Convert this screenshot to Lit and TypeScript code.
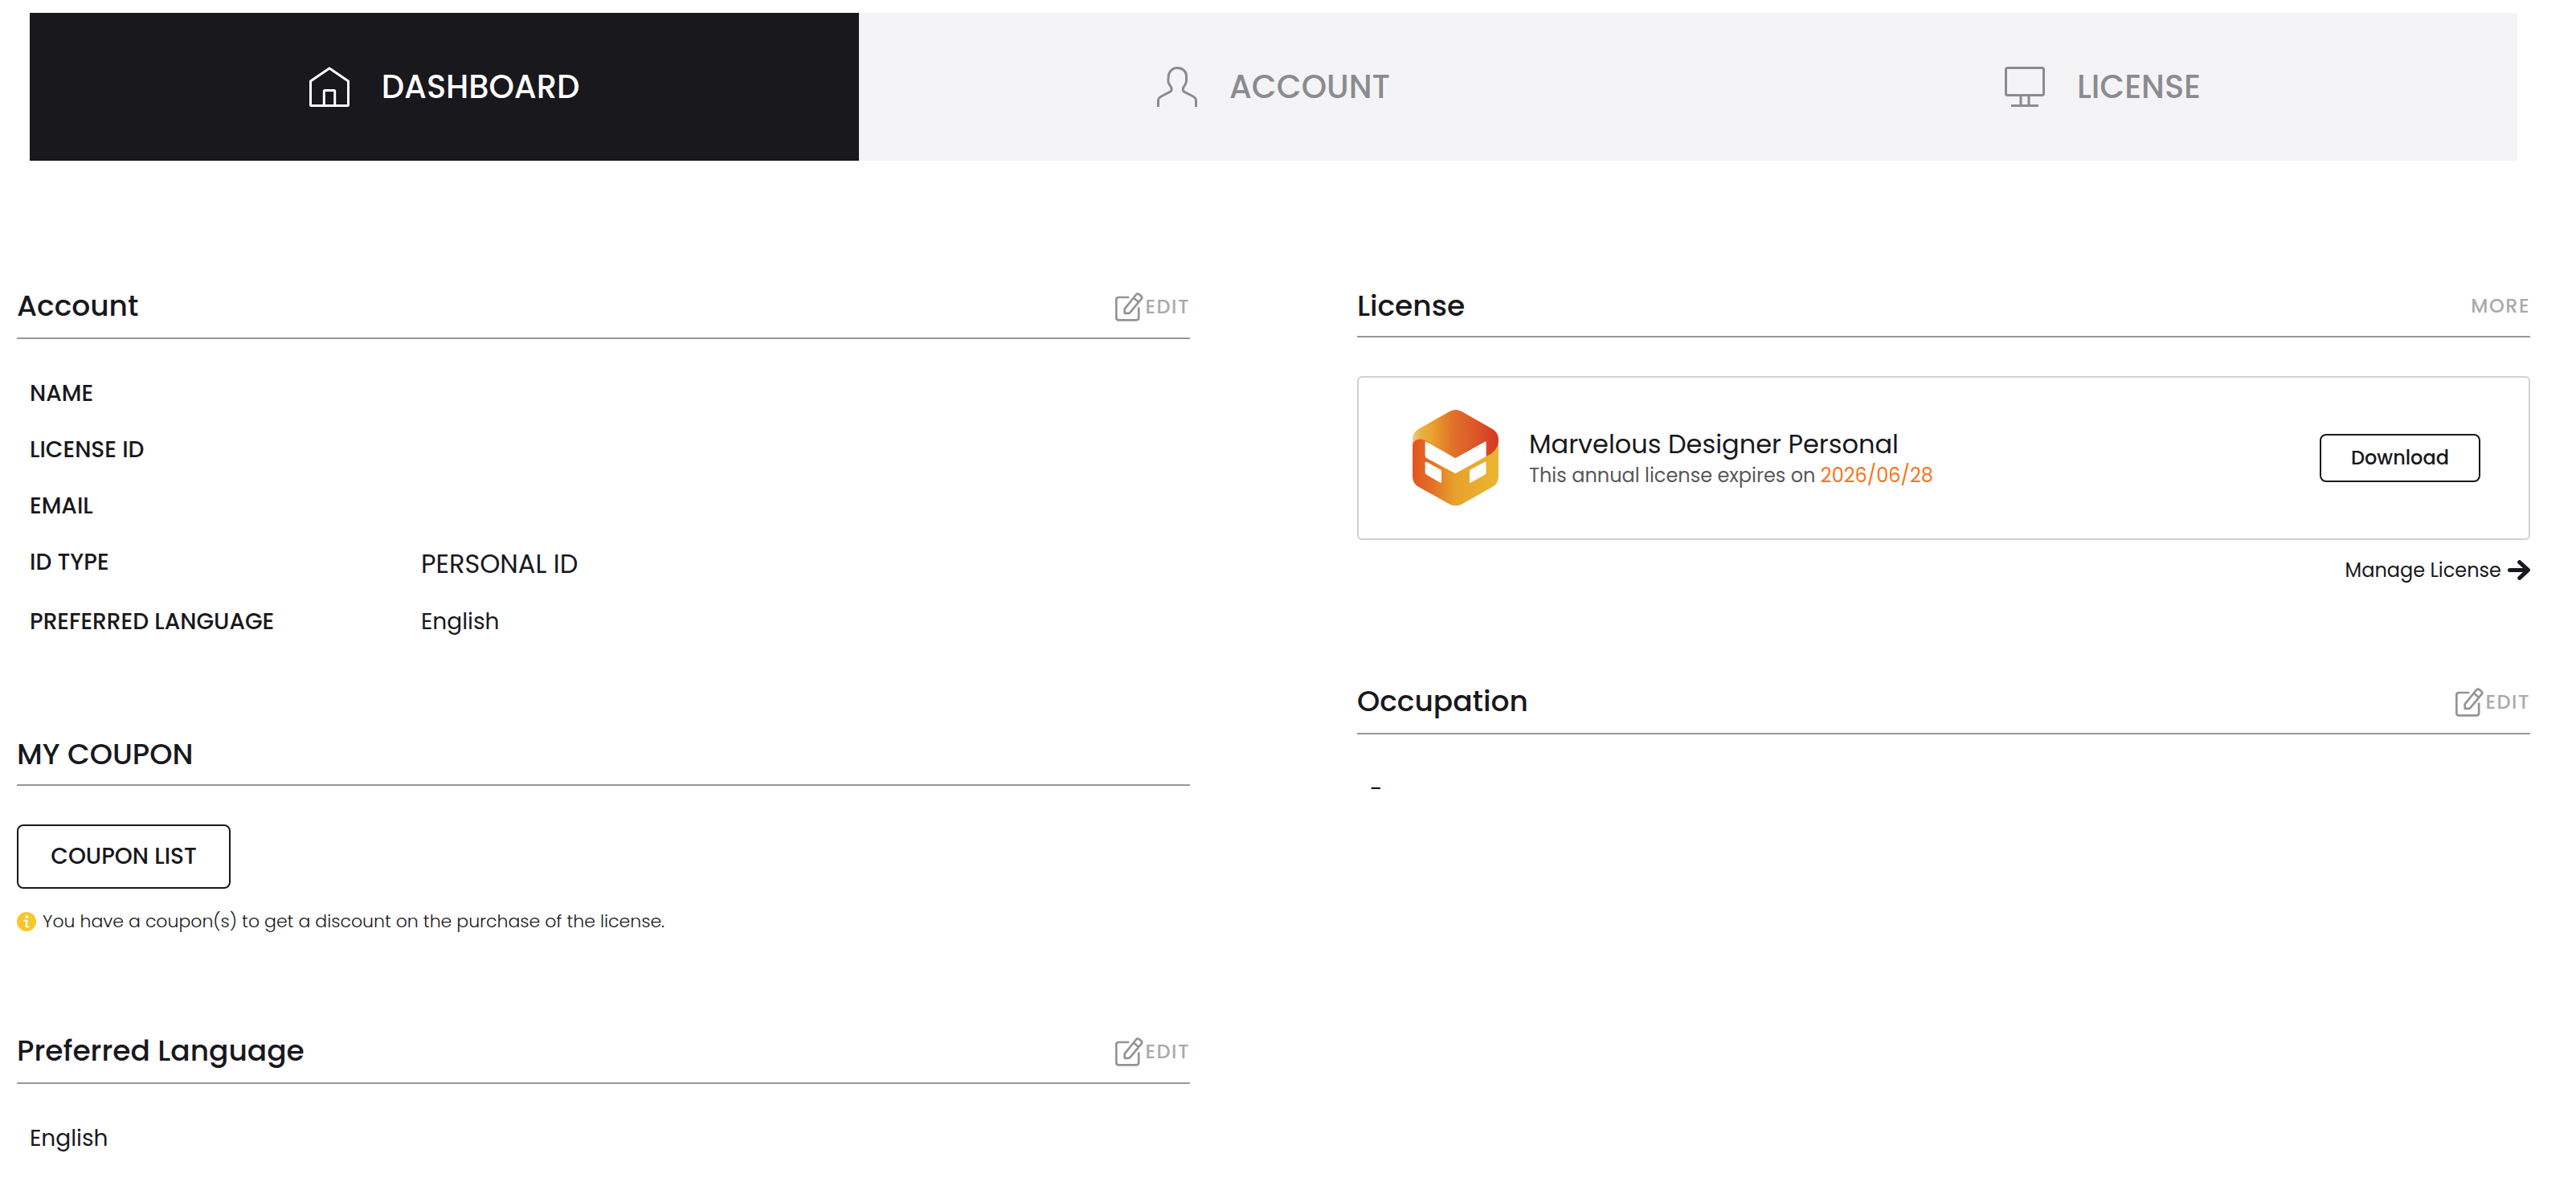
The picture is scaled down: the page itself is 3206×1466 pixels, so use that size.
import { LitElement, html, css, svg, nothing } from "lit";
import { customElement, property } from "lit/decorators.js";
import { classMap } from "lit/directives/class-map.js";

const houseIcon = svg`<svg class="nav-icon" viewBox="0 0 50 50" width="50" height="50" fill="none" stroke="currentColor" stroke-width="3" stroke-linejoin="round">
  <path d="M1.5 47.5V18L25 2L48.5 18V47.5Q48.5 48.5 47.5 48.5H2.5Q1.5 48.5 1.5 47.5Z"/>
  <path d="M18.3 48.5V30.5Q18.3 29.5 19.3 29.5H30.7Q31.7 29.5 31.7 30.5V48.5"/>
</svg>`;

const personIcon = svg`<svg class="nav-icon" viewBox="0 0 50 50" width="50" height="50" fill="none" stroke="currentColor" stroke-width="3" stroke-linejoin="round">
  <path d="M1.5 50V42C1.5 39.5 3 38 6 36.5L15.5 31.7C18.3 30.3 18.6 27.8 17.5 25.5C16.3 23.3 13.8 21.5 13.8 17.5L14.3 11.5C14.8 5.5 19.5 1.6 25.3 1.6C31.5 1.6 36.5 6 36.5 11.5V17.5C36.5 21.8 34.3 23.2 33 25.5C31.8 28 32 30.5 34.5 31.7L44 36.5C47 38 48.5 39.5 48.5 42V50"/>
</svg>`;

const monitorIcon = svg`<svg class="nav-icon" viewBox="0 0 50 50" width="50" height="50" fill="none" stroke="currentColor" stroke-width="3">
  <rect x="1.5" y="1.5" width="47" height="34" rx="2"/>
  <path d="M20 36V48M30 36V48M8 48.4H42"/>
</svg>`;

const pencilIcon = svg`<svg class="pencil" viewBox="0 0 35 36" width="35" height="36" fill="none" stroke="#949494" stroke-width="2.7" stroke-linejoin="round">
  <path d="M17.3 6H4.3Q1.3 6 1.3 9V31.3Q1.3 34.3 4.3 34.3H26.2Q29.2 34.3 29.2 31.3V18.5"/>
  <path d="M11.7 25.8V20.3L25.7 3Q27.6 .6 30 2.5L32 4.1Q34.2 5.9 32.4 8.2L18.5 24.9Q17.8 25.8 16.6 25.8ZM22.9 6.8L28.9 11.8"/>
</svg>`;

const arrowIcon = svg`<svg viewBox="0 0 28 25" width="28" height="25" fill="none" stroke="#19181d" stroke-width="5" stroke-linecap="round" stroke-linejoin="round">
  <path d="M2.5 12.4H24.5M14.7 2.6L25.4 12.4L14.7 22.3"/>
</svg>`;

const infoIcon = svg`<svg viewBox="0 0 24 24" width="24" height="24">
  <circle cx="12" cy="12" r="12" fill="#f6c72d"/>
  <circle cx="12.4" cy="5.9" r="1.9" fill="#fff"/>
  <path d="M9.2 10.8H12.6L11.6 17.2Q11.5 18.6 14.4 18.2" fill="none" stroke="#fff" stroke-width="2" stroke-linejoin="round" stroke-linecap="round"/>
</svg>`;

const productLogo = svg`<svg class="logo" viewBox="54 59 321 358" width="107" height="119.3">
  <defs>
    <linearGradient id="body" gradientUnits="userSpaceOnUse" x1="54" y1="0" x2="375" y2="0">
      <stop offset="0" stop-color="#e25420"/><stop offset=".22" stop-color="#e36f25"/>
      <stop offset=".5" stop-color="#e8a22d"/><stop offset="1" stop-color="#e9b731"/>
    </linearGradient>
    <linearGradient id="lid" gradientUnits="userSpaceOnUse" x1="54" y1="0" x2="375" y2="0">
      <stop offset="0" stop-color="#edc98c"/><stop offset=".09" stop-color="#eab144"/>
      <stop offset=".22" stop-color="#e8a52d"/><stop offset=".45" stop-color="#e0742a"/>
      <stop offset=".75" stop-color="#dc5528"/><stop offset="1" stop-color="#d73426"/>
    </linearGradient>
  </defs>
  <path fill="url(#body)" d="M54 175Q60 150 90 160L300 190L375 175V308Q375 334 352 347L236 412Q215 422 194 412L77 347Q54 334 54 308Z"/>
  <path fill="url(#lid)" d="M54 190V168Q54 144 76 131L194 64Q215 54 236 64L353 131Q375 144 375 170C375 202 356 222 328 233L214 241L113 180C92 163 60 163 54 190Z"/>
  <path fill="#fff" d="M105 178L214 240L324 178Q329 175 329 181V233L214 297L106 239Q101 236 101 231V181Q101 175 105 178Z"/>
  <path fill="#fff" d="M107 254L157 281Q162 284 162 289V328Q162 333 158 331L106 301Q101 298 101 293V257Q101 251 107 254Z"/>
  <path fill="#fff" d="M323 254L272 281Q267 284 267 289V328Q267 333 271 331L324 301Q329 298 329 293V257Q329 251 323 254Z"/>
</svg>`;

@customElement("section-header")
class SectionHeader extends LitElement {
  static styles = css`
    :host { display: block; }
    .bar {
      display: flex; justify-content: space-between; align-items: center;
      height: 76px; border-bottom: 2px solid #979797;
    }
    .bar.editable { height: 80px; }
    h2 { margin: 0; padding-top: 2px; font-size: 36px; font-weight: 500; line-height: 54px; color: #19181d; }
    .action {
      display: flex; align-items: center; gap: 3px; padding-top: 2px;
      font-size: 24px; font-weight: 500; line-height: 36px; letter-spacing: 1.5px; color: #a9aaad;
    }
    .editable .action { padding-top: 3px; }
    .pencil { display: block; }
  `;
  @property() heading = "";
  @property() action = "";

  render() {
    const editable = this.action === "EDIT";
    return html`<div class=${classMap({ bar: true, editable })}>
      <h2>${this.heading}</h2>
      ${this.action
        ? html`<div class="action">${editable ? pencilIcon : nothing}<span>${this.action}</span></div>`
        : nothing}
    </div>`;
  }
}

const tabs = [
  { label: "DASHBOARD", icon: houseIcon, active: true },
  { label: "ACCOUNT", icon: personIcon, active: false },
  { label: "LICENSE", icon: monitorIcon, active: false },
];

const accountRows = [
  { label: "NAME", value: "" },
  { label: "LICENSE ID", value: "" },
  { label: "EMAIL", value: "" },
  { label: "ID TYPE", value: "PERSONAL ID", large: true },
  { label: "PREFERRED LANGUAGE", value: "English" },
];

@customElement("app-root")
class AppRoot extends LitElement {
  static styles = css`
    :host {
      display: block; box-sizing: border-box; height: 1466px; overflow: hidden;
      background: #fff; color: #19181d;
      font-family: Poppins, Inter, "Liberation Sans", sans-serif;
    }
    nav { display: grid; grid-template-columns: repeat(3, 1032px); margin: 0 37px; padding-top: 16px; }
    .tab {
      display: flex; align-items: center; justify-content: center; gap: 40px; height: 184px;
      background: #f4f4f7; color: #8b8c8f; font-size: 40px; font-weight: 500; line-height: 60px;
    }
    .tab.active { background: #19181d; color: #fff; }
    .nav-icon { display: block; }
    main { display: grid; grid-template-columns: 1460px 1460px; column-gap: 208px; padding: 140px 0 0 21px; }
    .side { padding-top: 2px; }
    .rows { padding: 33px 16px 91px; }
    .row { display: grid; grid-template-columns: 487px 1fr; align-items: start; font-size: 28px; line-height: 70px; }
    .label { font-weight: 500; }
    .value.large { font-size: 32px; line-height: 74px; }
    .coupon { padding: 48px 0 103px; }
    .button {
      display: flex; box-sizing: border-box; align-items: center; justify-content: center;
      border: 2px solid #19181d; border-radius: 8px; background: #fff; color: inherit;
      font-family: inherit; font-weight: 500; padding: 0;
    }
    .button.coupons { width: 266px; height: 80px; font-size: 28px; }
    .button.download { width: 200px; height: 60px; padding-bottom: 1px; font-size: 24px; margin-left: auto; }
    .note { display: flex; align-items: center; gap: 8px; margin-top: 24px; font-size: 22px; font-weight: 300; line-height: 34px; }
    .single { padding: 33px 16px 0; font-size: 28px; line-height: 70px; }
    .card {
      display: flex; align-items: center; box-sizing: border-box; height: 204px; margin-top: 48px;
      padding: 0 60px 0 67px; border: 2px solid #d1d1d1; border-radius: 6px;
    }
    .product { margin: -4px 0 0 38px; }
    .product-name { font-size: 32px; line-height: 48px; }
    .expiry { font-size: 24px; line-height: 30px; color: #57575a; }
    .date { color: #fb7319; }
    .manage {
      display: flex; align-items: center; justify-content: flex-end; gap: 8px;
      margin: 19px 0 105px; font-size: 24px; line-height: 34px;
    }
    .manage span { padding-top: 2px; }
  `;

  render() {
    return html`
      <nav>
        ${tabs.map((t) => html`<div class=${classMap({ tab: true, active: t.active })}>${t.icon}<span>${t.label}</span></div>`)}
      </nav>
      <main>
        <div>
          <section-header heading="Account" action="EDIT"></section-header>
          <div class="rows">
            ${accountRows.map((r) => html`<div class="row">
              <span class="label">${r.label}</span>
              <span class=${classMap({ value: true, large: !!r.large })}>${r.value}</span>
            </div>`)}
          </div>
          <section-header heading="MY COUPON"></section-header>
          <div class="coupon">
            <button class="button coupons">COUPON LIST</button>
            <div class="note">${infoIcon}<span>You have a coupon(s) to get a discount on the purchase of the license.</span></div>
          </div>
          <section-header heading="Preferred Language" action="EDIT"></section-header>
          <div class="single">English</div>
        </div>
        <div class="side">
          <section-header heading="License" action="MORE"></section-header>
          <div class="card">
            ${productLogo}
            <div class="product">
              <div class="product-name">Marvelous Designer Personal</div>
              <div class="expiry">This annual license expires on <span class="date">2026/06/28</span></div>
            </div>
            <button class="button download">Download</button>
          </div>
          <div class="manage"><span>Manage License</span>${arrowIcon}</div>
          <section-header heading="Occupation" action="EDIT"></section-header>
          <div class="single">-</div>
        </div>
      </main>
    `;
  }
}
